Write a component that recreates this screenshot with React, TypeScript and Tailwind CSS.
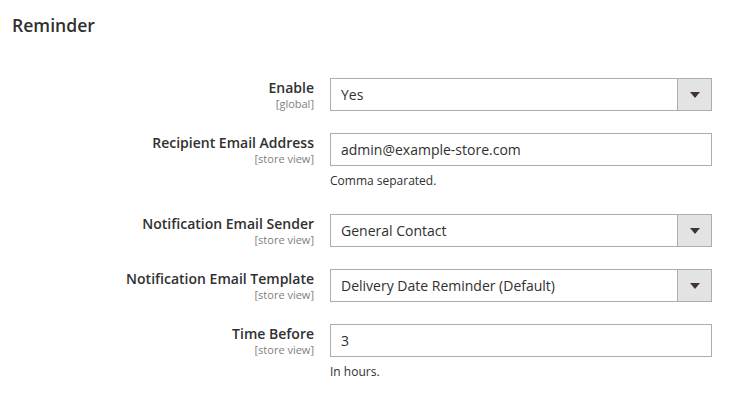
import { ReactNode } from 'react';

type Field = {
  label: string;
  scope: string;
  value: string;
  select?: boolean;
  note?: string;
};

const fields: Field[] = [
  { label: 'Enable', scope: '[global]', value: 'Yes', select: true },
  { label: 'Recipient Email Address', scope: '[store view]', value: 'admin@example-store.com', note: 'Comma separated.' },
  { label: 'Notification Email Sender', scope: '[store view]', value: 'General Contact', select: true },
  { label: 'Notification Email Template', scope: '[store view]', value: 'Delivery Date Reminder (Default)', select: true },
  { label: 'Time Before', scope: '[store view]', value: '3', note: 'In hours.' },
];

function Control({ field }: { field: Field }): ReactNode {
  if (field.select) {
    return (
      <div className="flex h-[33px] w-[382px] border border-[#adadad] bg-white">
        <div className="flex flex-1 items-center pl-[10px] text-[14px] text-[#303030]">{field.value}</div>
        <div className="flex w-[34px] items-center justify-center border-l border-[#adadad] bg-[#e3e3e3]">
          <svg width="10" height="6" viewBox="0 0 10 6">
            <path d="M0 0h10L5 6z" fill="#41362f" />
          </svg>
        </div>
      </div>
    );
  }
  return (
    <div className="flex h-[33px] w-[382px] items-center border border-[#adadad] bg-white pl-[10px] text-[14px] text-[#303030]">
      {field.value}
    </div>
  );
}

export default function App() {
  return (
    <div className="min-h-[395px] w-[738px] bg-white font-['Open_Sans',sans-serif] text-[#303030]">
      <h2 className="pl-[12px] pt-[15px] text-[17.6px] font-semibold leading-[20px] text-[#303030]">Reminder</h2>

      <div className="mt-[43px]">
        {fields.map((f) => (
          <div key={f.label} className="mb-[22px] flex items-start">
            <div className="w-[314px] text-right">
              <div className="text-[14px] font-semibold leading-[19px]">{f.label}</div>
              <div className="text-[11px] leading-[13px] text-[#808080]">{f.scope}</div>
            </div>
            <div className="ml-[16px]">
              <Control field={f} />
              {f.note && <div className="mb-[3px] mt-[6px] text-[12px] leading-[17px]">{f.note}</div>}
            </div>
          </div>
        ))}
      </div>
    </div>
  );
}
